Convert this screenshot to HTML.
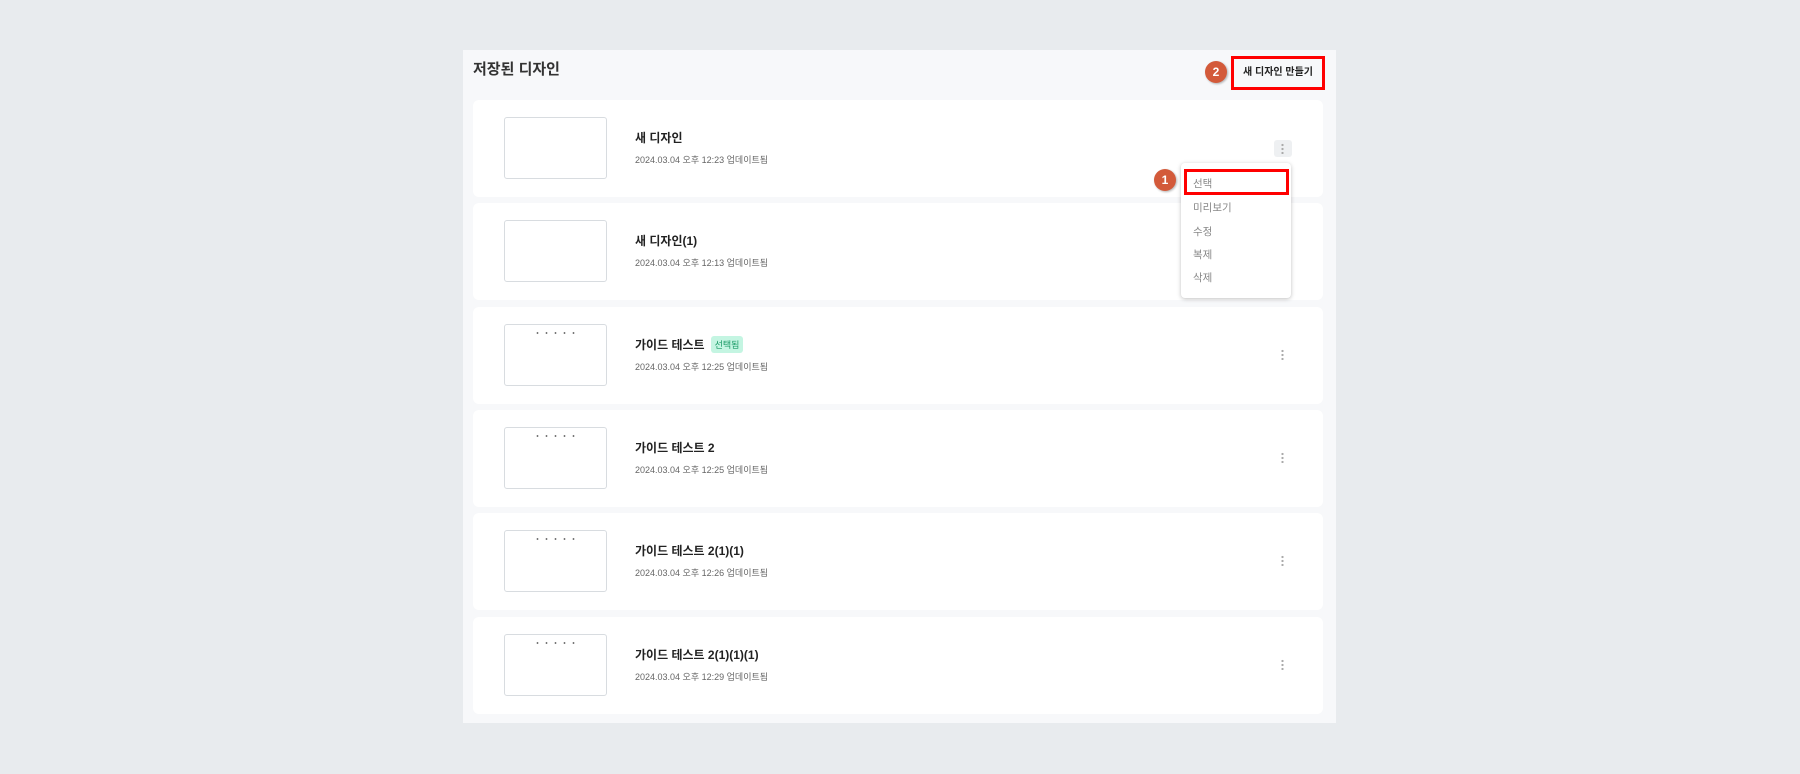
<!DOCTYPE html>
<html><head><meta charset="utf-8"><style>
*{margin:0;padding:0;box-sizing:border-box}
body{width:1800px;height:774px;background:#e8ebee;font-family:"Liberation Sans","Noto Sans CJK KR",sans-serif;position:relative;overflow:hidden}
.panel{position:absolute;left:463px;top:50px;width:873px;height:673px;background:#f7f8fa}
.h{position:absolute;left:473px;top:58px;font-size:15px;font-weight:bold;color:#333}
.card{position:absolute;left:473px;width:850px;height:97px;background:#fff;border-radius:6px}
.thumb{position:absolute;left:31px;top:17px;width:103px;height:62px;border:1px solid #d8dce0;border-radius:3px;background:#fff}
.dots{position:absolute;left:28px;top:7px;width:46px;height:2px;background:radial-gradient(circle,#777 0.8px,transparent 1px) 0 0/9px 2px}
.t{position:absolute;left:162px;top:29px;font-size:12px;font-weight:bold;color:#222}
.d{position:absolute;left:162px;top:53px;font-size:9px;color:#666}
.k{position:absolute;left:808px;top:42px;width:3px;height:11px;background:radial-gradient(circle,#aaa 1px,transparent 1.3px) 0 0/3px 4px}
.badge{display:inline-block;margin-left:6px;background:#c4f5e2;color:#1a9a66;font-size:9px;padding:2px 4px;border-radius:3px;vertical-align:1px;font-weight:normal}
.num{position:absolute;width:22px;height:22px;border-radius:50%;background:#d35a3a;color:#fff;font-size:12px;font-weight:bold;text-align:center;line-height:22px;box-shadow:1px 1px 2px rgba(0,0,0,.3)}
.menu{position:absolute;left:1181px;top:163px;width:110px;height:135px;background:#fff;border-radius:4px;box-shadow:0 1px 4px rgba(0,0,0,.25)}
.menu div{position:absolute;left:12px;font-size:10.5px;color:#888}
</style></head><body>
<div class="panel"></div>
<div class="h">저장된 디자인</div>
<div style="position:absolute;left:1231px;top:56px;width:94px;height:34px;border:3px solid #f00;font-size:10px;font-weight:bold;color:#222;text-align:center;line-height:28px">새 디자인 만들기</div>
<div class="num" style="left:1205px;top:61px">2</div>

<div class="card" style="top:100px"><div class="thumb"></div><div class="t">새 디자인</div><div class="d">2024.03.04 오후 12:23 업데이트됨</div>
<div style="position:absolute;left:801px;top:40px;width:18px;height:17px;background:#eef0f2;border-radius:3px"></div><div class="k" style="left:808px;top:43px"></div></div>
<div class="card" style="top:203px"><div class="thumb"></div><div class="t">새 디자인(1)</div><div class="d">2024.03.04 오후 12:13 업데이트됨</div></div>
<div class="card" style="top:307px"><div class="thumb"><div class="dots"></div></div><div class="t">가이드 테스트<span class="badge">선택됨</span></div><div class="d">2024.03.04 오후 12:25 업데이트됨</div><div class="k"></div></div>
<div class="card" style="top:410px"><div class="thumb"><div class="dots"></div></div><div class="t">가이드 테스트 2</div><div class="d">2024.03.04 오후 12:25 업데이트됨</div><div class="k"></div></div>
<div class="card" style="top:513px"><div class="thumb"><div class="dots"></div></div><div class="t">가이드 테스트 2(1)(1)</div><div class="d">2024.03.04 오후 12:26 업데이트됨</div><div class="k"></div></div>
<div class="card" style="top:617px"><div class="thumb"><div class="dots"></div></div><div class="t">가이드 테스트 2(1)(1)(1)</div><div class="d">2024.03.04 오후 12:29 업데이트됨</div><div class="k"></div></div>

<div class="menu">
<div style="top:13px">선택</div><div style="top:37px">미리보기</div><div style="top:61px">수정</div><div style="top:84px">복제</div><div style="top:107px">삭제</div>
</div>
<div style="position:absolute;left:1184px;top:169px;width:105px;height:26px;border:3px solid #f00"></div>
<div class="num" style="left:1154px;top:169px">1</div>
</body></html>
